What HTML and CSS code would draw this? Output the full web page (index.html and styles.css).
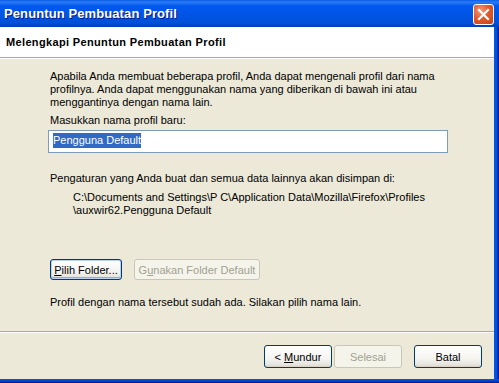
FILE: index.html
```html
<!DOCTYPE html>
<html lang="id">
<head>
    <meta charset="UTF-8">
    <title>Penuntun Pembuatan Profil</title>
    <link rel="stylesheet" href="styles.css">
</head>
<body>
    <div class="window">
        <div class="titlebar">
            <span class="title">Penuntun Pembuatan Profil</span>
            <span class="close-btn">
                <svg width="13" height="13" viewBox="0 0 13 13">
                    <path d="M2 2 L11 11 M11 2 L2 11" stroke="#fff" stroke-width="2.2" stroke-linecap="square"/>
                </svg>
            </span>
        </div>
        <div class="frame">
            <div class="client">
                <div class="header">Melengkapi Penuntun Pembuatan Profil</div>
                <div class="sep"></div>
                <div class="page">
                    <p class="intro">Apabila Anda membuat beberapa profil, Anda dapat mengenali profil dari nama profilnya. Anda dapat menggunakan nama yang diberikan di bawah ini atau menggantinya dengan nama lain.</p>
                    <p class="label">Masukkan nama profil baru:</p>
                    <div class="textbox"><span class="selected">Pengguna Default</span></div>
                    <p class="label-store">Pengaturan yang Anda buat dan semua data lainnya akan disimpan di:</p>
                    <p class="path">C:\Documents and Settings\P C\Application Data\Mozilla\Firefox\Profiles<br>\auxwir62.Pengguna Default</p>
                    <div class="folder-row">
                        <span class="btn btn-focus btn-pilih"><span><u>P</u>ilih Folder...</span></span>
                        <span class="btn btn-disabled btn-default-folder"><span>G<u>u</u>nakan Folder Default</span></span>
                    </div>
                    <p class="status">Profil dengan nama tersebut sudah ada. Silakan pilih nama lain.</p>
                </div>
                <div class="sep"></div>
                <div class="footer">
                    <span class="btn btn-nav"><span>&lt; <u>M</u>undur</span></span>
                    <span class="btn btn-nav btn-disabled"><span>Selesai</span></span>
                    <span class="btn btn-nav btn-cancel"><span>Batal</span></span>
                </div>
            </div>
            <div class="border-right"></div>
        </div>
        <div class="border-bottom"></div>
    </div>
</body>
</html>
```

FILE: styles.css
```css
body {
    margin: 0;
    font-family: "Liberation Sans", Arial, sans-serif;
    font-size: 11px;
    color: #000;
    background: #ece9d8;
}
.window {
    width: 499px;
    height: 383px;
    display: flex;
    flex-direction: column;
    overflow: hidden;
}
.titlebar {
    height: 27px;
    display: flex;
    align-items: center;
    justify-content: space-between;
    padding: 0 5px 0 4px;
    box-sizing: border-box;
    background: linear-gradient(to bottom, #0a5ee8 0%, #2b7bf5 8%, #0058ee 22%, #0054e3 60%, #0050d8 85%, #003fbf 100%);
}
.title {
    color: #fff;
    font-weight: bold;
    font-size: 13px;
    letter-spacing: 0.1px;
    text-shadow: 1px 1px 0 #0a1883;
}
.close-btn {
    width: 19px;
    height: 19px;
    margin-top: 1px;
    border: 1px solid #fff;
    border-radius: 3px;
    display: flex;
    align-items: center;
    justify-content: center;
    background: radial-gradient(circle at 35% 30%, #f29a7a 0%, #e35a2e 45%, #c8400f 100%);
}
.frame {
    flex: 1;
    display: flex;
}
.client {
    flex: 1;
    display: flex;
    flex-direction: column;
}
.border-right {
    width: 5px;
    background: linear-gradient(to right, #0058ee 0%, #0050d8 50%, #00138c 100%);
}
.border-bottom {
    height: 4px;
    background: linear-gradient(to bottom, #0058ee 0%, #0046c6 50%, #00138c 100%);
}
.header {
    height: 30px;
    background: #fff;
    padding-left: 6px;
    font-weight: bold;
    letter-spacing: 0.35px;
    line-height: 30px;
}
.sep {
    height: 1px;
    background: #aca899;
    border-bottom: 1px solid #fff;
}
.page {
    height: 272px;
    padding: 11px 0 0 50px;
    box-sizing: border-box;
}
.page p {
    margin: 0;
    line-height: 13px;
}
.intro {
    width: 400px;
}
.label {
    margin-top: 5px !important;
}
.textbox {
    width: 394px;
    height: 19px;
    margin: 3px 0 0 -2px;
    border: 1px solid #7f9db9;
    background: #fff;
    padding: 2px 0 0 4px;
    box-sizing: content-box;
}
.selected {
    background: #316ac5;
    color: #fff;
    line-height: 15px;
    display: inline-block;
}
.label-store {
    margin-top: 19px !important;
}
.path {
    margin: 6px 0 0 23px !important;
}
.folder-row {
    display: flex;
    gap: 12px;
    margin-top: 42px;
}
.btn {
    height: 21px;
    box-sizing: border-box;
    border: 1px solid #003c74;
    border-radius: 3px;
    display: inline-flex;
    align-items: center;
    justify-content: center;
    background: linear-gradient(to bottom, #ffffff 0%, #f5f4f0 60%, #e5e4dc 90%, #d6d0c5 100%);
}
.btn-pilih {
    width: 72px;
}
.btn-default-folder {
    width: 126px;
}
.btn-focus {
    box-shadow: inset 0 0 0 1px #b8d1f8, inset 0 -1px 0 1px #89adef;
}
.btn-disabled {
    border-color: #c9c7ba;
    color: #a1a192;
    background: #f5f4ea;
}
.status {
    margin-top: 16px !important;
}
.footer {
    flex: 1;
    display: flex;
    align-items: flex-start;
    padding: 12px 0 0 264px;
}
.btn-nav {
    width: 68px;
    height: 23px;
    margin-right: 2px;
}
.btn-cancel {
    margin-left: 10px;
}
```
